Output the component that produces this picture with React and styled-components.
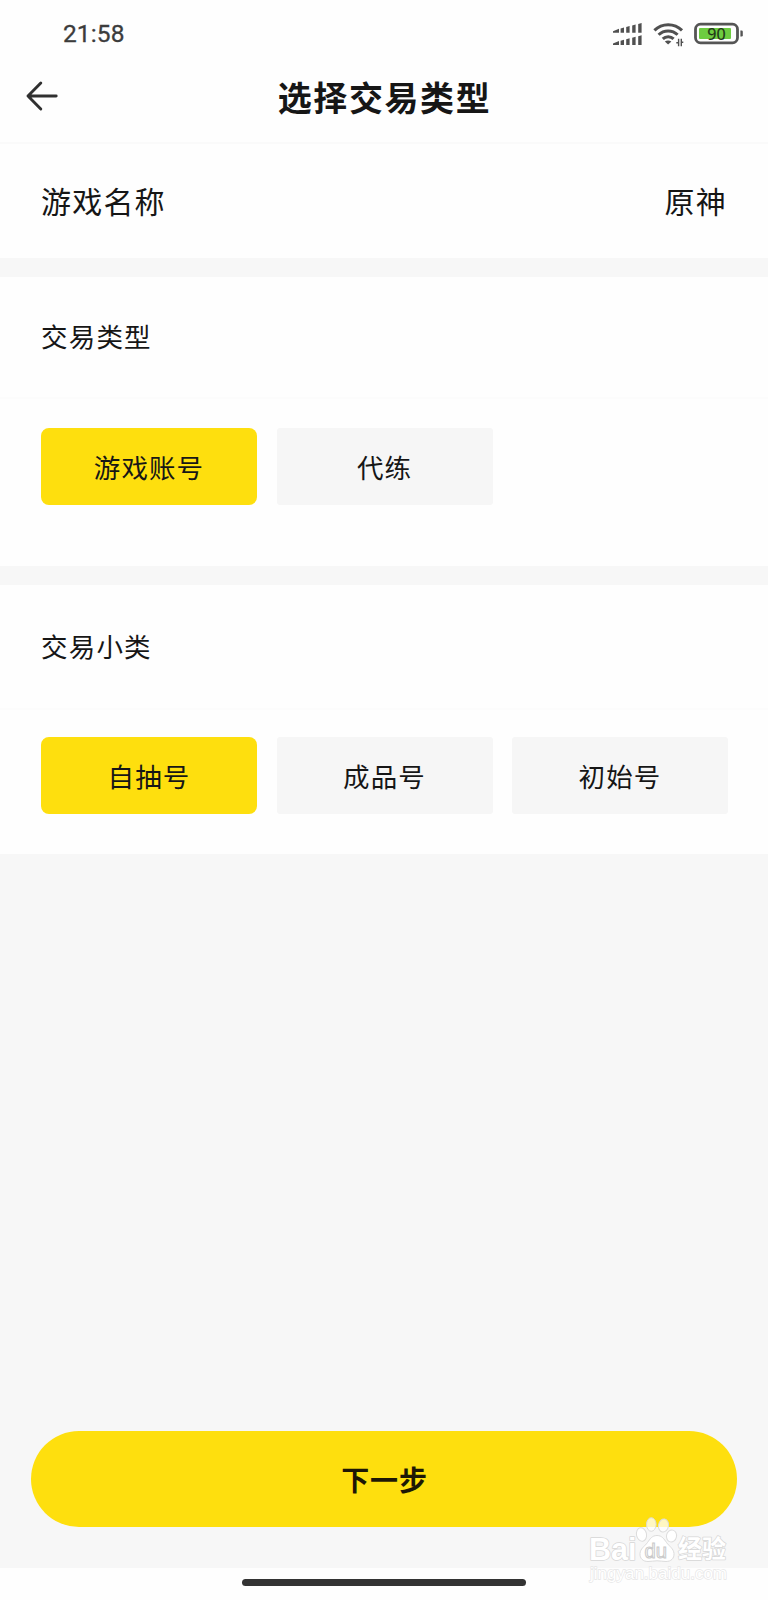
import React, { useState } from "react";
import styled, { createGlobalStyle } from "styled-components";

const GlobalStyle = createGlobalStyle`
  * { box-sizing: border-box; }
  body {
    margin: 0;
    background: #f7f7f7;
    color: #161616;
    font-family: "Noto Sans CJK SC", "Noto Sans", sans-serif;
  }
  button { font: inherit; color: inherit; border: 0; padding: 0; cursor: pointer; }
`;

const Screen = styled.main`
  position: relative;
  width: 768px;
  height: 1600px;
  display: flex;
  flex-direction: column;
  background: #f7f7f7;
  overflow: hidden;
`;

const StatusBar = styled.div`
  height: 64px;
  flex: none;
  padding: 4px 24px 0 63px;
  display: flex;
  align-items: center;
  justify-content: space-between;
  background: #fefefe;
`;

const Clock = styled.time`
  font: 400 24.5px/1 Roboto, sans-serif;
  letter-spacing: 0.1px;
  color: #3c3c3c;
  -webkit-text-stroke: 0.3px #3c3c3c;
`;

const StatusIcons = styled.svg`
  display: block;
  width: 134px;
  height: 30px;
  margin-bottom: 4px;
`;

const Header = styled.header`
  height: 80px;
  flex: none;
  display: grid;
  grid-template-columns: 84px 1fr 84px;
  align-items: center;
  background: #fefefe;
  border-bottom: 2px solid #fafafa;
`;

const BackButton = styled.button`
  width: 36px;
  height: 32px;
  margin: -14px 0 0 24px;
  background: none;
  svg { display: block; }
`;

const Title = styled.h1`
  margin: 0;
  padding-bottom: 12px;
  text-align: center;
  font-size: 34px;
  line-height: 50px;
  font-weight: 700;
  letter-spacing: 1.6px;
  text-indent: 1px;
`;

const InfoRow = styled.section`
  height: 114px;
  flex: none;
  padding: 0 41px 2px 41px;
  display: flex;
  align-items: center;
  justify-content: space-between;
  background: #fefefe;
  font-size: 30px;
  letter-spacing: 1.2px;
`;

const Section = styled.section`
  flex: none;
  margin-top: ${(p) => p.$gap}px;
  height: ${(p) => p.$height}px;
  background: #fefefe;
`;

const SectionTitle = styled.h2`
  margin: 0;
  height: ${(p) => p.$height}px;
  padding: 0 0 3px 41px;
  display: flex;
  align-items: center;
  border-bottom: 2px solid #fcfcfc;
  font-size: 26.5px;
  font-weight: 400;
  letter-spacing: 1.2px;
`;

const Options = styled.div`
  display: grid;
  grid-template-columns: repeat(3, 216px);
  gap: 19.5px;
  padding: ${(p) => p.$top}px 40px 0 41px;
`;

const Option = styled.button`
  height: 77px;
  border-radius: ${(p) => (p.$active ? 8 : 3)}px;
  background: ${(p) => (p.$active ? "#fedf0e" : "#f6f6f6")};
  font-size: 26.5px;
  line-height: 40px;
  letter-spacing: 1.1px;
`;

const Footer = styled.footer`
  margin-top: auto;
  flex: none;
`;

const NextButton = styled.button`
  display: block;
  width: 706px;
  height: 96px;
  margin: 0 31px 41px;
  border-radius: 48px;
  background: #fedf0e;
  color: #1d1705;
  font-size: 28px;
  font-weight: 700;
  letter-spacing: 0.8px;
  text-indent: 1px;
`;

const HomeArea = styled.div`
  height: 32px;
  display: flex;
  justify-content: center;
  padding-top: 10.5px;
  background: #fefefe;
`;

const HomeIndicator = styled.span`
  width: 284px;
  height: 7px;
  border-radius: 4px;
  background: #333;
`;

const Watermark = styled.svg`
  position: absolute;
  left: 584px;
  top: 1512px;
  width: 150px;
  height: 76px;
  pointer-events: none;
`;

const SIGNAL_BARS = [
  [620.6, 5],
  [626.2, 6.5],
  [632.2, 8],
  [638.2, 9.5],
];

function SignalWifiBattery() {
  return (
    <StatusIcons viewBox="610 17 134 30" aria-label="90%">
      {[32.7, 45].map((base) => (
        <g key={base} fill="#505050">
          <path d={`M613 ${base - 1.4}L619 ${base - 4}V${base}H613Z`} />
          {SIGNAL_BARS.map(([x, h]) => (
            <path key={x} d={`M${x} ${base - h + 0.8}l3.4-1V${base}h-3.4Z`} />
          ))}
        </g>
      ))}
      <g fill="none" stroke="#505050" strokeWidth="3">
        <path d="M654.4 30.4A19.500 19.500 0 0 1 682 30.4" />
        <path d="M658.600 34.800A13.500 13.500 0 0 1 677.600 34.800" />
        <path d="M662.800 38.900A7.600 7.600 0 0 1 673.600 38.900" />
      </g>
      <path d="M664.800 41.600Q668 39.200 671.400 41.600L668.100 44.600Z" fill="#505050" />
      <path d="M678.600 46.200V38.800M676.300 42.700h2.300M681.300 38.800V46.200M681.300 42.200h2" fill="none" stroke="#505050" strokeWidth="1.4" />
      <rect x="695.5" y="24.2" width="42" height="18.6" rx="5" fill="#fefefe" stroke="#555" strokeWidth="2.8" />
      <rect x="699" y="28" width="32" height="11" rx="1" fill="#6dcc40" />
      <path d="M740.4 30.5h1.2q1.2 0 1.2 1.2v3.6q0 1.2-1.2 1.2h-1.2z" fill="#555" />
      <text x="716.5" y="39.6" textAnchor="middle" fontFamily="Noto Sans, sans-serif" fontSize="16" fill="#1f3518" stroke="#1f3518" strokeWidth=".2">90</text>
    </StatusIcons>
  );
}

function BaiduWatermark() {
  return (
    <Watermark viewBox="584 1512 150 76" aria-hidden="true">
      <g fill="#fff" stroke="#dcdcdc" strokeWidth="1">
        <ellipse cx="641.5" cy="1534.5" rx="5" ry="6.8" transform="rotate(-12 641.5 1534.5)" />
        <ellipse cx="651.3" cy="1524.5" rx="4.8" ry="6.8" fillOpacity=".75" />
        <ellipse cx="663.5" cy="1525.5" rx="5" ry="6.6" fillOpacity=".75" transform="rotate(10 663.5 1525.5)" />
        <ellipse cx="671.5" cy="1536" rx="5" ry="6" transform="rotate(12 671.5 1536)" />
        <path d="M657 1535.5c5 0 7 3.5 9.5 7 3 4 7 6 7.5 11 .3 5-3 8-8 8-3 0-6-.7-9-.7s-6 .7-9 .7c-5 0-8.3-3-8-8 .4-5 4.5-7 7.5-11 2.5-3.500 4.500-7 9.500-7Z" />
      </g>
      <g fill="#fff" stroke="#d6d6d6" strokeWidth="1.5" paintOrder="stroke" strokeLinejoin="round">
        <text x="589" y="1559.5" fontFamily="Liberation Sans, sans-serif" fontSize="31" fontWeight="700" textLength="47.5" lengthAdjust="spacingAndGlyphs">Bai</text>
        <text x="678" y="1557.5" fontFamily="Noto Sans CJK SC, sans-serif" fontSize="24.5" fontWeight="700" textLength="48" lengthAdjust="spacingAndGlyphs">经验</text>
      </g>
      <text x="644.5" y="1557.5" fontFamily="Liberation Sans, sans-serif" fontSize="20" fill="#fff" stroke="#cacaca" strokeWidth="1" textLength="22.5" lengthAdjust="spacingAndGlyphs">du</text>
      <text x="590" y="1579" fontFamily="Liberation Sans, sans-serif" fontSize="17" fill="#fff" stroke="#e6e6e6" strokeWidth="1.3" paintOrder="stroke" textLength="137" lengthAdjust="spacingAndGlyphs">jingyan.baidu.com</text>
    </Watermark>
  );
}

function OptionGroup({ items, top }) {
  const [selected, setSelected] = useState(items[0]);
  return (
    <Options $top={top}>
      {items.map((item) => (
        <Option key={item} $active={item === selected} onClick={() => setSelected(item)}>
          {item}
        </Option>
      ))}
    </Options>
  );
}

export default function App() {
  return (
    <>
      <GlobalStyle />
      <Screen>
        <StatusBar>
          <Clock>21:58</Clock>
          <SignalWifiBattery />
        </StatusBar>
        <Header>
          <BackButton aria-label="返回">
            <svg width="36" height="32" viewBox="0 0 36 32" fill="none" stroke="#303030" strokeWidth="2.9" strokeLinecap="round" strokeLinejoin="round">
              <path d="M32.2 16H4M16.8 3L4 16L16.8 29" />
            </svg>
          </BackButton>
          <Title>选择交易类型</Title>
        </Header>
        <InfoRow>
          <span>游戏名称</span>
          <span>原神</span>
        </InfoRow>
        <Section $gap={19} $height={289}>
          <SectionTitle $height={122}>交易类型</SectionTitle>
          <OptionGroup top={29} items={["游戏账号", "代练"]} />
        </Section>
        <Section $gap={19} $height={269}>
          <SectionTitle $height={125}>交易小类</SectionTitle>
          <OptionGroup top={27} items={["自抽号", "成品号", "初始号"]} />
        </Section>
        <Footer>
          <NextButton>下一步</NextButton>
          <HomeArea>
            <HomeIndicator />
          </HomeArea>
        </Footer>
        <BaiduWatermark />
      </Screen>
    </>
  );
}
